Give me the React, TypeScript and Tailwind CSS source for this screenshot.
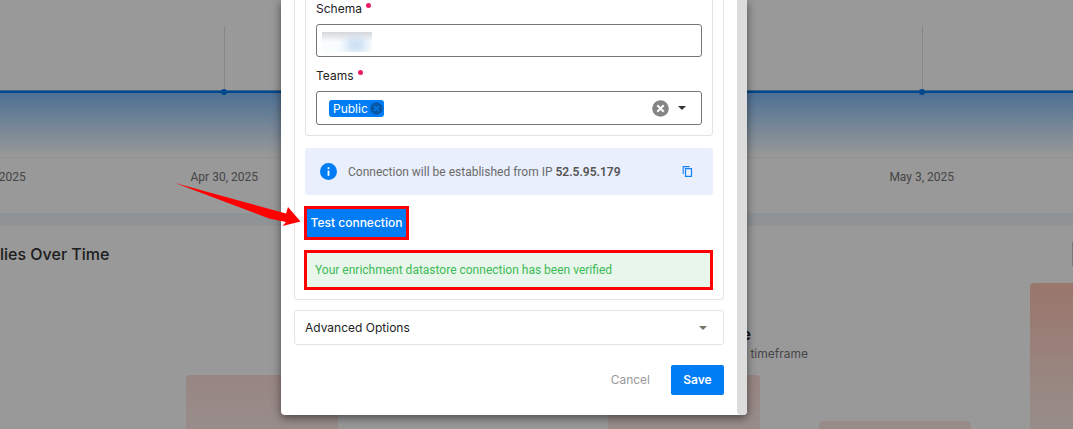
import React from "react";

type Bar = { id: string; className: string };

const bars: Bar[] = [
  { id: "a", className: "h-[54px] from-[#fddfd9] to-[#fdece8]" },
  { id: "b", className: "h-0" },
  { id: "c", className: "h-[54px] from-[#fddfd9] to-[#fdece8]" },
  { id: "d", className: "h-2 from-[#fde8e4] to-[#fdeae6]" },
  { id: "e", className: "h-[146px] from-[#ffc5b4] to-[#fdece8]" },
];

function Marker({ className }: { className: string }) {
  return (
    <svg className={"absolute top-[26px] -translate-x-1/2 " + className} width="8" height="70" viewBox="0 0 8 70" aria-hidden="true">
      <path d="M4.5 0V64" stroke="#e2e2e2" strokeWidth="1" />
      <circle cx="4" cy="66" r="3" fill="#0078e8" />
    </svg>
  );
}

function Backdrop() {
  return (
    <div className="flex min-h-screen flex-col overflow-hidden bg-white">
      <section className="relative h-[213px] shrink-0">
        <div className="h-[90px]" />
        <div className="h-px bg-[#6aa9e6]" />
        <div className="h-[66px] border-t-2 border-[#0078e8] bg-linear-to-b from-[#82bcf8] to-white" />
        <div className="border-t border-[#f4f4f4]" />
        <Marker className="left-[20.9%]" />
        <Marker className="left-[85.9%]" />
        <div className="absolute inset-x-0 top-[168px] font-['Roboto',sans-serif] text-xs leading-[18px] text-[#737373]">
          <span className="absolute right-[97.6%] whitespace-nowrap">2025</span>
          <span className="absolute left-[20.9%] -translate-x-1/2 whitespace-nowrap">Apr 30, 2025</span>
          <span className="absolute left-[85.9%] -translate-x-1/2 whitespace-nowrap">May 3, 2025</span>
        </div>
      </section>
      <div className="h-[13px] shrink-0 bg-[#eef5fa]" />
      <section className="relative flex flex-1 flex-col justify-between">
        <div className="flex items-start justify-between pt-4">
          <h2 className="text-base leading-6 font-medium text-[#333]">lies Over Time</h2>
          <div className="h-6 w-px bg-[#c8c8c8]" />
        </div>
        <div className="absolute top-[98px] right-[24.7%] text-right">
          <p className="pr-[57px] text-base leading-5 font-semibold text-[#222]">No data available</p>
          <p className="text-xs leading-5 text-[#777]">in the selected timeframe</p>
        </div>
        <div className="flex items-end gap-[59px] overflow-hidden pl-[186px]">
          {bars.map((bar) => (
            <div key={bar.id} className={"w-[152px] shrink-0 rounded-t bg-linear-to-b " + bar.className} />
          ))}
        </div>
      </section>
    </div>
  );
}

function Label({ htmlFor, children }: { htmlFor: string; children: React.ReactNode }) {
  return (
    <label htmlFor={htmlFor} className="flex h-[18px] gap-1 text-xs leading-[18px] text-[#222]">
      {children}
      <span className="mt-[3px] size-[5px] rounded-full bg-[#e91e63]" />
    </label>
  );
}

function Caret({ color }: { color: string }) {
  return (
    <svg width="8" height="4" viewBox="0 0 8 4" fill={color} aria-hidden="true">
      <path d="M0 0h8L4 4z" />
    </svg>
  );
}

function Dialog() {
  return (
    <div role="dialog" aria-label="Enrichment datastore" className="flex w-[466px] rounded-b bg-white shadow-[0_3px_10px_rgba(0,0,0,0.5)]">
      <div className="min-w-0 flex-1 px-[13px] pb-5">
        <div className="rounded-b border border-t-0 border-[#e3e3e3] px-2.5 pb-[9px]">
          <div className="rounded-b border border-t-0 border-[#e3e3e3] px-2.5 pb-2.5">
            <Label htmlFor="schema">Schema</Label>
            <div className="relative mt-1.5">
              <input id="schema" className="block h-[33px] w-full rounded-[3px] border border-[#777] bg-white px-3 text-xs outline-none" />
              <div className="pointer-events-none absolute top-2 left-1.5 h-5 w-[50px] overflow-hidden bg-linear-to-b from-[#d6d7da] to-[#fafdfd] to-50%">
                <div className="mt-1.5 ml-6 h-3.5 w-5 bg-[#b9d5f2] opacity-80 blur-[5px]" />
              </div>
            </div>
            <div className="mt-2.5">
              <Label htmlFor="teams">Teams</Label>
            </div>
            <div className="mt-1.5 flex h-[34px] items-center rounded-[3px] border border-[#777] pr-[15px] pl-3">
              <span className="flex h-[17px] items-center gap-0.5 rounded-[3px] bg-[#007df5] pr-px pl-1 text-xs leading-[17px] text-white">
                Public
                <button type="button" aria-label="Remove Public">
                  <svg className="block" width="13" height="13" viewBox="0 0 13 13" aria-hidden="true">
                    <circle cx="6.5" cy="6.5" r="6.2" fill="#0757a6" />
                    <path d="M4 4l5 5M9 4l-5 5" stroke="#007df5" strokeWidth="1.1" />
                  </svg>
                </button>
              </span>
              <input id="teams" className="min-w-0 flex-1 bg-transparent px-2 text-xs outline-none" />
              <button type="button" aria-label="Clear teams">
                <svg className="block" width="17" height="17" viewBox="0 0 17 17" aria-hidden="true">
                  <circle cx="8.5" cy="8.5" r="8.3" fill="#858585" />
                  <path d="M5.3 5.3l6.4 6.4M11.7 5.3l-6.4 6.4" stroke="#fff" strokeWidth="2" />
                </svg>
              </button>
              <button type="button" aria-label="Open teams" className="ml-[9px]">
                <Caret color="#333" />
              </button>
            </div>
          </div>

          <div className="mt-3 flex h-[47px] items-center rounded-[3px] bg-[#e9effc] pr-5 pl-[15px] text-xs text-[#6b6b6b]">
            <svg width="17" height="17" viewBox="0 0 17 17" aria-hidden="true">
              <circle cx="8.5" cy="8.5" r="8.5" fill="#007df5" />
              <path d="M7.6 4.3h1.8v1.8H7.6zM7.6 7.5h1.8v5.2H7.6z" fill="#fff" />
            </svg>
            <p className="ml-[11px] flex-1 font-['Roboto',sans-serif]">
              Connection will be established from IP <b className="font-semibold text-[#555]">52.5.95.179</b>
            </p>
            <button type="button" aria-label="Copy IP address">
              <svg className="block" width="11" height="11" viewBox="0 0 11 11" fill="none" stroke="#1683f5" aria-hidden="true">
                <path d="M3.5 2.7h6v7.6h-6z" strokeWidth="1.2" />
                <path d="M1.2 8V.6H7.5" strokeWidth="1.1" />
              </svg>
            </button>
          </div>

          <div className="-ml-px">
            <button type="button" className="mt-[11px] block h-[34px] w-[105px] border-3 border-[#f00] bg-[#007df5] text-xs font-medium whitespace-nowrap text-white">
              Test connection
            </button>
            <p role="status" className="mt-2.5 flex h-10 items-center border-3 border-[#f00] bg-[#e8f6ec] px-2 font-['Roboto',sans-serif] text-xs text-[#3dbb55]">
              Your enrichment datastore connection has been verified
            </p>
          </div>
        </div>

        <button type="button" className="mt-2.5 flex h-[35px] w-full items-center justify-between rounded-[3px] border border-[#e3e3e3] pr-4 pl-2.5 text-xs text-[#222]">
          Advanced Options
          <Caret color="#757567" />
        </button>

        <div className="mt-5 flex justify-end gap-[11px]">
          <button type="button" className="h-[30px] px-2.5 text-xs text-[#999]">Cancel</button>
          <button type="button" className="h-[30px] w-[53px] rounded-[2px] bg-[#007df5] text-xs font-semibold text-white">Save</button>
        </div>
      </div>
      <div className="w-2.5 shrink-0 rounded-b bg-[#dcdcdc]" />
    </div>
  );
}

export default function App() {
  return (
    <main className="relative min-h-screen overflow-hidden font-['Inter','Liberation_Sans',sans-serif]">
      <Backdrop />
      <div className="absolute inset-0 flex items-start justify-center bg-black/40 pr-[45px]">
        <div className="relative">
          <Dialog />
          <svg className="absolute top-[180px] -left-[107px]" width="128" height="48" viewBox="0 0 128 48" fill="#f00" aria-hidden="true">
            <path d="M1 3L112 33.5L114 27L126.5 41.5L108.5 46L112 42L95 38.5Z" />
          </svg>
        </div>
      </div>
    </main>
  );
}
